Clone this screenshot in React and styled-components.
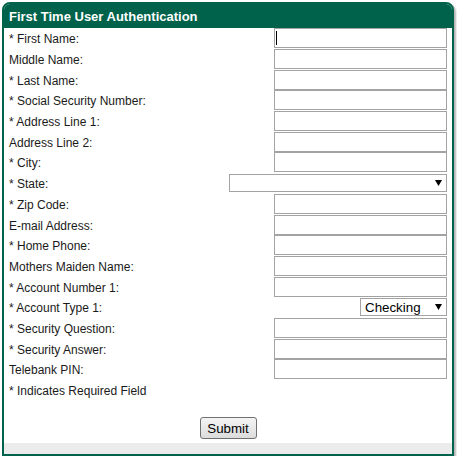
import React from "react";
import styled, { createGlobalStyle } from "styled-components";

const Global = createGlobalStyle`
  html, body { margin: 0; padding: 0; background: #fff; }
  body { font-family: "Liberation Sans", Arial, sans-serif; }
`;

const Panel = styled.div`
  margin: 2px 0 0 2px;
  width: 452px;
  height: 454px;
  box-sizing: border-box;
  border: 2px solid #00624a;
  border-radius: 8px 8px 0 0;
  box-shadow: 2px 2px 2px #b5b5b5;
  background: #fff;
  display: flex;
  flex-direction: column;
  overflow: hidden;
`;

const Header = styled.div`
  height: 24px;
  background: #00624a;
  color: #fff;
  font-weight: bold;
  font-size: 13px;
  line-height: 25px;
  padding-left: 5px;
`;

const Form = styled.div`
  display: grid;
  grid-template-columns: 1fr auto;
  grid-auto-rows: 20.7px;
  align-items: center;
  padding: 0 5px;
`;

const Label = styled.div`
  font-size: 12px;
  color: #1a1a1a;
  white-space: nowrap;
  padding-top: 2px;
  grid-column: ${(p) => (p.$wide ? "1 / -1" : "1")};
`;

const Cell = styled.div`
  justify-self: end;
  position: relative;
  display: flex;
`;

const Input = styled.input`
  width: 173px;
  height: 20px;
  box-sizing: border-box;
  border: 1px solid #a3a3a3;
  padding: 0 2px;
  margin: 0;
  outline: none;
  background: #fff;
`;

const Caret = styled.span`
  position: absolute;
  left: 2px;
  top: 3px;
  width: 1px;
  height: 14px;
  background: #000;
`;

const Select = styled.select`
  appearance: none;
  width: ${(p) => p.$w}px;
  height: 18px;
  box-sizing: border-box;
  border: 1px solid #a3a3a3;
  border-radius: 0;
  background: #fff;
  font-family: "Liberation Sans", Arial, sans-serif;
  font-size: 13.33px;
  color: #000;
  padding: 1px 0 0 4px;
  margin: 0;
  outline: none;
`;

const Arrow = styled.svg`
  position: absolute;
  right: 5px;
  top: 6px;
  pointer-events: none;
`;

const ButtonRow = styled.div`
  display: flex;
  justify-content: center;
  padding: 17px 0 4px;
`;

const Button = styled.button`
  width: 57px;
  height: 22px;
  box-sizing: border-box;
  border: 1px solid #707070;
  border-radius: 3px;
  background: linear-gradient(#f4f4f4, #dcdcdc);
  font-family: "Liberation Sans", Arial, sans-serif;
  font-size: 13.33px;
  color: #000;
  padding: 1px 0 0;
`;

const Footer = styled.div`
  flex: 1;
  background: #ebebeb;
`;

const fields = [
  { label: "* First Name:", caret: true },
  { label: "Middle Name:" },
  { label: "* Last Name:" },
  { label: "* Social Security Number:" },
  { label: "* Address Line 1:" },
  { label: "Address Line 2:" },
  { label: "* City:" },
  { label: "* State:", select: 218, value: "" },
  { label: "* Zip Code:" },
  { label: "E-mail Address:" },
  { label: "* Home Phone:" },
  { label: "Mothers Maiden Name:" },
  { label: "* Account Number 1:" },
  { label: "* Account Type 1:", select: 87, value: "Checking" },
  { label: "* Security Question:" },
  { label: "* Security Answer:" },
  { label: "Telebank PIN:" },
];

const DownArrow = () => (
  <Arrow width="7" height="6" viewBox="0 0 7 6">
    <path d="M0 0H7L3.5 6Z" fill="#000" />
  </Arrow>
);

export default function App() {
  return (
    <>
      <Global />
      <Panel>
        <Header>First Time User Authentication</Header>
        <Form>
          {fields.map((f) => (
            <React.Fragment key={f.label}>
              <Label>{f.label}</Label>
              <Cell>
                {f.select ? (
                  <>
                    <Select $w={f.select} defaultValue={f.value}>
                      <option value="">{""}</option>
                      <option value="Checking">Checking</option>
                    </Select>
                    <DownArrow />
                  </>
                ) : (
                  <>
                    <Input type="text" />
                    {f.caret && <Caret />}
                  </>
                )}
              </Cell>
            </React.Fragment>
          ))}
          <Label $wide>* Indicates Required Field</Label>
        </Form>
        <ButtonRow>
          <Button>Submit</Button>
        </ButtonRow>
        <Footer />
      </Panel>
    </>
  );
}
